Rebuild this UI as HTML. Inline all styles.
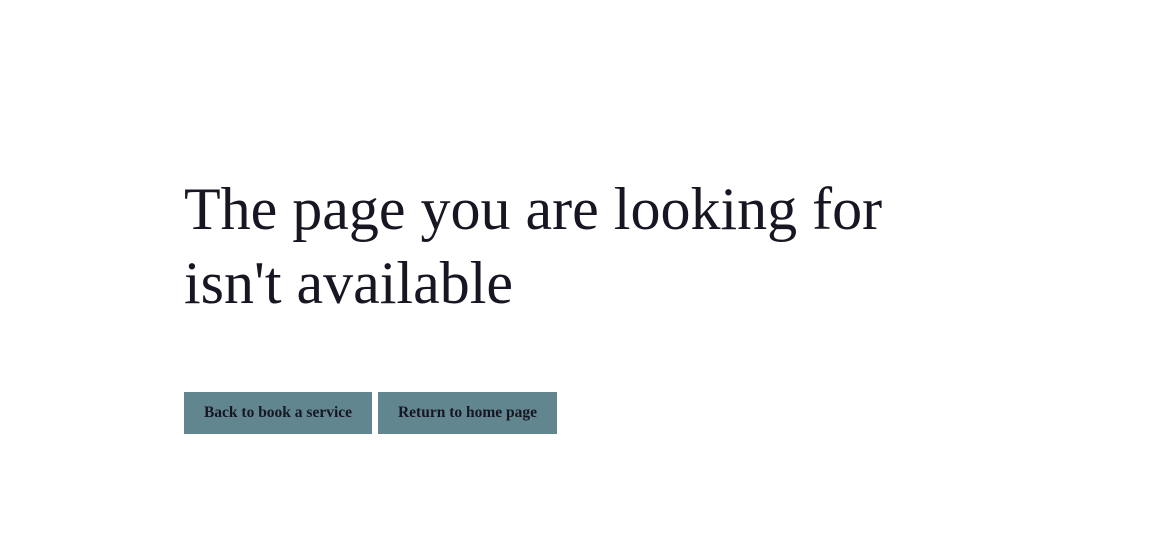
<!DOCTYPE html>
<html><head><style>
body{margin:0;background:#fff;width:1157px;height:560px;overflow:hidden;font-family:"Liberation Serif",serif;color:#171723}
h1{position:absolute;left:184px;top:172px;margin:0;font-weight:normal;font-size:60px;line-height:74px;width:800px}
.b{position:absolute;top:392px;height:42px;background:#61868f;color:#171723;font-size:15.5px;font-weight:bold;line-height:42px;text-align:center;white-space:nowrap}
</style></head><body>
<h1>The page you are looking for<br>isn't available</h1>
<div class="b" style="left:184px;width:188px">Back to book a service</div>
<div class="b" style="left:378px;width:179px">Return to home page</div>
</body></html>
